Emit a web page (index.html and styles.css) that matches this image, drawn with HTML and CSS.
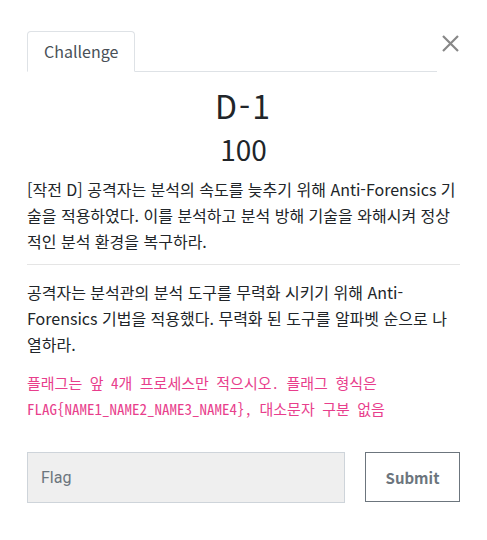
FILE: index.html
```html
<!DOCTYPE html>
<html lang="ko">
<head>
    <meta charset="UTF-8">
    <meta name="viewport" content="width=device-width, initial-scale=1.0">
    <title>Challenge</title>
    <link rel="stylesheet" href="styles.css">
</head>
<body>
    <div class="modal">
        <div class="modal-header">
            <ul class="nav-tabs">
                <li class="nav-item active"><a href="#">Challenge</a></li>
            </ul>
            <button class="close" aria-label="Close">
                <svg width="17" height="17" viewBox="0 0 17 17">
                    <path d="M1 1L16 16M16 1L1 16" stroke="#888" stroke-width="2.2" fill="none"/>
                </svg>
            </button>
        </div>
        <div class="challenge">
            <h2 class="challenge-name">D-1</h2>
            <h3 class="challenge-value">100</h3>
            <div class="challenge-desc">
                <p>[작전 D] 공격자는 분석의 속도를 늦추기 위해 Anti-Forensics 기술을 적용하였다. 이를 분석하고 분석 방해 기술을 와해시켜 정상적인 분석 환경을 복구하라.</p>
                <hr>
                <p>공격자는 분석관의 분석 도구를 무력화 시키기 위해 Anti-Forensics 기법을 적용했다. 무력화 된 도구를 알파벳 순으로 나열하라.</p>
                <p class="hint"><code>플래그는 앞 4개 프로세스만 적으시오. 플래그 형식은 FLAG{NAME1_NAME2_NAME3_NAME4}, 대소문자 구분 없음</code></p>
            </div>
            <form class="submit-row">
                <input type="text" class="flag-input" placeholder="Flag">
                <button class="submit-btn" type="submit">Submit</button>
            </form>
        </div>
    </div>
</body>
</html>
```

FILE: styles.css
```css
* {
    box-sizing: border-box;
}
body {
    margin: 0;
    padding: 0;
    background: #fff;
    font-family: "Noto Sans CJK KR", "Noto Sans", sans-serif;
    color: #212529;
}
.modal {
    width: 487px;
    padding: 31px 27px 0 27px;
}
.modal-header {
    display: flex;
    align-items: flex-start;
}
.nav-tabs {
    flex: 1;
    display: flex;
    margin: 0;
    padding: 0;
    list-style: none;
    border-bottom: 1px solid #dee2e6;
}
.nav-item {
    margin-bottom: -1px;
}
.nav-item a {
    display: block;
    padding: 7px 16px 8px 16px;
    font-size: 16px;
    line-height: 24px;
    color: #495057;
    text-decoration: none;
    border: 1px solid #dee2e6;
    border-bottom-color: #fff;
    border-radius: 4px 4px 0 0;
    background: #fff;
}
.close {
    width: 23px;
    height: 23px;
    margin-top: 4px;
    padding: 0 0 0 3px;
    border: none;
    background: none;
    display: flex;
    align-items: flex-start;
    justify-content: center;
    cursor: pointer;
}
.challenge {
    padding-top: 11px;
}
.challenge-name {
    margin: 0;
    text-align: center;
    font-size: 32px;
    font-weight: 400;
    line-height: 44px;
    letter-spacing: 2px;
}
.challenge-value {
    margin: 2px 0 7px 0;
    text-align: center;
    font-size: 28px;
    font-weight: 400;
    line-height: 40px;
}
.challenge-desc p {
    margin: 0 0 10px 0;
    font-size: 16px;
    line-height: 26px;
}
.challenge-desc hr {
    margin: 0 0 14px 0;
    border: 0;
    border-top: 1px solid #e5e5e5;
}
.challenge-desc .hint {
    margin: 12px 0 0 0;
    line-height: 26px;
}
.hint code {
    font-family: "Noto Sans Mono CJK KR", "DejaVu Sans Mono", monospace;
    font-size: 15px;
    line-height: 20px;
    color: #e83e8c;
}
.submit-row {
    display: flex;
    gap: 20px;
    margin-top: 31px;
}
.flag-input {
    flex: 1;
    height: 51px;
    padding: 0 13px;
    background: #efefef;
    border: 1px solid #ced4da;
    font-family: Roboto, sans-serif;
    font-size: 16px;
    color: #495057;
}
.flag-input::placeholder {
    color: #6c757d;
}
.submit-btn {
    width: 95px;
    height: 50px;
    background: #fff;
    border: 1px solid #6c757d;
    color: #6c757d;
    font-family: "Noto Sans CJK KR", sans-serif;
    font-size: 15px;
    font-weight: 700;
    cursor: pointer;
}
```
